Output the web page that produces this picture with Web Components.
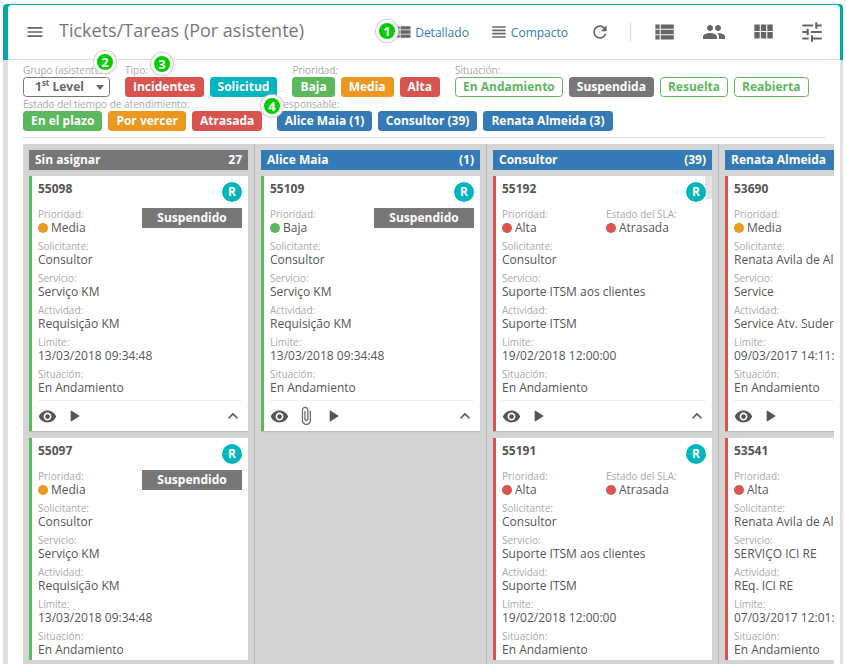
<!DOCTYPE html>
<html lang="es"><head><meta charset="utf-8"><title>Tickets/Tareas</title>
<style>
html,body{margin:0;padding:0;background:#fff;height:100%;overflow:hidden}
body{font-family:"Open Sans","Liberation Sans",sans-serif;color:#555}
</style></head><body>
<x-app>
  <x-marker n="1" style="left:373px;top:16px"></x-marker>
  <x-marker n="2" style="left:91px;top:47px"></x-marker>
  <x-marker n="3" style="left:148px;top:49px"></x-marker>
  <x-marker n="4" style="left:258px;top:91px"></x-marker>
  <x-header slot="header" title="Tickets/Tareas (Por asistente)"></x-header>
  <x-filters slot="filters">
    <x-group label="Grupo (asistentes):"><x-select>1<sup>st</sup> Level</x-select></x-group>
    <x-group label="Tipo:"><x-chip c="#d9534f">Incidentes</x-chip><x-chip c="#00b5bd">Solicitud</x-chip></x-group>
    <x-group label="Prioridad:"><x-chip c="#5cb85c">Baja</x-chip><x-chip c="#ec971f">Media</x-chip><x-chip c="#d9534f">Alta</x-chip></x-group>
    <x-group label="Situación:"><x-chip outline c="#5cb85c">En Andamiento</x-chip><x-chip c="#777">Suspendida</x-chip><x-chip outline c="#5cb85c">Resuelta</x-chip><x-chip outline c="#5cb85c">Reabierta</x-chip></x-group>
    <x-group label="Estado del tiempo de atendimiento:"><x-chip c="#5cb85c">En el plazo</x-chip><x-chip c="#ec971f">Por vercer</x-chip><x-chip c="#d9534f">Atrasada</x-chip></x-group>
    <x-group label="Responsable:"><x-chip c="#337ab7" style="padding:0 7.5px">Alice Maia (1)</x-chip><x-chip c="#337ab7">Consultor (39)</x-chip><x-chip c="#337ab7">Renata Almeida (3)</x-chip></x-group>
  </x-filters>
  <x-board slot="board">
    <x-column name="Sin asignar" count="27" c="#777">
      <x-ticket id-no="55098" edge="#5cb85c" pri="Media" pc="#ec971f" tag="Suspendido" req="Consultor" svc="Serviço KM" act="Requisição KM" lim="13/03/2018 09:34:48"></x-ticket>
      <x-ticket id-no="55097" edge="#5cb85c" pri="Media" pc="#ec971f" tag="Suspendido" req="Consultor" svc="Serviço KM" act="Requisição KM" lim="13/03/2018 09:34:48"></x-ticket>
    </x-column>
    <x-column name="Alice Maia" count="(1)" c="#337ab7">
      <x-ticket id-no="55109" edge="#5cb85c" pri="Baja" pc="#5cb85c" tag="Suspendido" req="Consultor" svc="Serviço KM" act="Requisição KM" lim="13/03/2018 09:34:48" clip></x-ticket>
    </x-column>
    <x-column name="Consultor" count="(39)" c="#337ab7">
      <x-ticket id-no="55192" edge="#d9534f" pri="Alta" pc="#d9534f" sla="Atrasada" req="Consultor" svc="Suporte ITSM aos clientes" act="Suporte ITSM" lim="19/02/2018 12:00:00" notch></x-ticket>
      <x-ticket id-no="55191" edge="#d9534f" pri="Alta" pc="#d9534f" sla="Atrasada" req="Consultor" svc="Suporte ITSM aos clientes" act="Suporte ITSM" lim="19/02/2018 12:00:00"></x-ticket>
    </x-column>
    <x-column name="Renata Almeida" count="(3)" c="#337ab7">
      <x-ticket id-no="53690" edge="#d9534f" pri="Media" pc="#ec971f" req="Renata Avila de Almeida" svc="Service" act="Service Atv. Suder Almeida" lim="09/03/2017 14:11:05"></x-ticket>
      <x-ticket id-no="53541" edge="#d9534f" pri="Alta" pc="#d9534f" req="Renata Avila de Almeida" svc="SERVIÇO ICI RE" act="REq. ICI RE" lim="07/03/2017 12:01:30"></x-ticket>
    </x-column>
  </x-board>
</x-app>
<script>
const P={
menu:'M3 18h18v-2H3v2zm0-5h18v-2H3v2zm0-7v2h18V6H3z',
list:'M4 14h4v-4H4v4zm0 5h4v-4H4v4zM4 9h4V5H4v4zm5 5h12v-4H9v4zm0 5h12v-4H9v4zM9 5v4h12V5H9z',
head:'M4 15h16v-2H4v2zm0 4h16v-2H4v2zm0-8h16V9H4v2zm0-6v2h16V5H4z',
refresh:'M17.65 6.35C16.2 4.9 14.21 4 12 4c-4.42 0-7.99 3.58-7.99 8s3.57 8 7.99 8c3.73 0 6.84-2.55 7.73-6h-2.08c-.82 2.33-3.04 4-5.65 4-3.31 0-6-2.69-6-6s2.69-6 6-6c1.66 0 3.14.69 4.22 1.78L13 11h7V4l-2.35 2.35z',
people:'M16 11c1.66 0 2.99-1.34 2.99-3S17.66 5 16 5c-1.66 0-3 1.34-3 3s1.34 3 3 3zm-8 0c1.66 0 2.99-1.34 2.99-3S9.66 5 8 5C6.34 5 5 6.34 5 8s1.34 3 3 3zm0 2c-2.33 0-7 1.17-7 3.5V19h14v-2.5c0-2.33-4.67-3.5-7-3.5zm8 0c-.29 0-.62.02-.97.05 1.16.84 1.97 1.97 1.97 3.45V19h6v-2.5c0-2.33-4.67-3.5-7-3.5z',
grid:'M4 11h5V5H4v6zm0 7h5v-6H4v6zm6 0h5v-6h-5v6zm6 0h5v-6h-5v6zm-6-7h5V5h-5v6zm6-6v6h5V5h-5z',
tune:'M3 17v2h6v-2H3zM3 5v2h10V5H3zm10 16v-2h8v-2h-8v-2h-2v6h2zM7 9v2H3v2h4v2h2V9H7zm14 4v-2H11v2h10zm-6-4h2V7h4V5h-4V3h-2v6z',
eye:'M12 4.5C7 4.5 2.73 7.61 1 12c1.73 4.39 6 7.5 11 7.5s9.27-3.11 11-7.5c-1.73-4.39-6-7.5-11-7.5zM12 17c-2.76 0-5-2.24-5-5s2.24-5 5-5 5 2.24 5 5-2.24 5-5 5zm0-8c-1.66 0-3 1.34-3 3s1.34 3 3 3 3-1.34 3-3-1.34-3-3-3z',
play:'M8 5v14l11-7z',
clip:'M16.5 6v11.5c0 2.21-1.79 4-4 4s-4-1.79-4-4V5c0-1.38 1.12-2.5 2.5-2.5s2.5 1.12 2.5 2.5v10.5c0 .55-.45 1-1 1s-1-.45-1-1V6H10v9.5c0 1.38 1.12 2.5 2.5 2.5s2.5-1.12 2.5-2.5V5c0-2.21-1.79-4-4-4S7 2.79 7 5v12.5c0 3.04 2.46 5.5 5.5 5.5s5.5-2.46 5.5-5.5V6h-1.5z',
up:'M12 8l-6 6 1.41 1.41L12 10.83l4.59 4.58L18 14z'};
const ic=(n,s,c='#666')=>`<svg width="${s}" height="${s}" viewBox="0 0 24 24" fill="${c}" style="display:block;flex:none"><path d="${P[n]}"/></svg>`;
const esc=s=>String(s??'').replace(/&/g,'&amp;').replace(/</g,'&lt;');
class Base extends HTMLElement{
  connectedCallback(){ if(this.shadowRoot) return; this.attachShadow({mode:'open'}).innerHTML=this.render(); }
}
customElements.define('x-app',class extends Base{render(){return `<style>
:host{display:block;box-sizing:border-box;position:relative;width:840px;height:660px;margin:4px 0 0 3px;
 background:linear-gradient(#00a9a8 0 56px,#e0e0e0 56px);border-radius:4px 4px 0 0}
.p{position:absolute;inset:1px 3px 0 5px;background:#fff;border-radius:4px 4px 0 0;display:flex;flex-direction:column;overflow:hidden;
 box-shadow:0 -1px 0 #00b3b3}
</style><div class="p"><slot name="header"></slot><slot name="filters"></slot><slot name="board"></slot></div><slot></slot>`}});
customElements.define('x-marker',class extends Base{render(){return `<style>
:host{position:absolute;z-index:5;display:flex;align-items:center;justify-content:center;box-sizing:border-box;width:22px;height:22px;border-radius:50%;
 background:#0c0;border:3px solid #fff;box-shadow:0 0 1px 1px #ccc;color:#fff;font:700 13px/1 "Open Sans","Liberation Sans",sans-serif}
</style>${esc(this.getAttribute('n'))}`}});
customElements.define('x-header',class extends Base{render(){return `<style>
:host{display:flex;align-items:center;height:54px;flex:none;border-bottom:1px solid #ddd;padding:0 15px 0 17px;color:#777}
h1{font:400 18px/24px "Open Sans","Liberation Sans",sans-serif;color:#777;margin:0 0 4px 14px;flex:1;white-space:nowrap}
.v{display:flex;align-items:center;gap:2px;font-size:12px;color:#337ab7;white-space:nowrap}
.d{width:1px;height:20px;background:#ddd;margin:0 20px 0 20px}
</style>${ic('menu',20)}<h1>${esc(this.getAttribute('title'))}</h1>
<span class="v" style="margin-right:20px">${ic('list',20)}Detallado</span>
<span class="v" style="margin-right:22px">${ic('head',20)}Compacto</span>
${ic('refresh',20)}<span class="d"></span>
${ic('list',26)}<span style="width:25px"></span>${ic('people',24)}<span style="width:24px"></span>${ic('grid',26)}<span style="width:23px"></span>${ic('tune',26)}`}});
customElements.define('x-filters',class extends Base{render(){return `<style>
:host{display:flex;flex-wrap:wrap;gap:1px 15px;flex:none;margin:4px 15px 0 15px;padding-bottom:6px;border-bottom:1px solid #ddd;align-content:flex-start}
</style><slot></slot>`}});
customElements.define('x-group',class extends Base{render(){return `<style>
:host{display:block}
.l{font-size:10px;line-height:12px;color:#aaa;white-space:nowrap;height:13px;width:0}
.r{display:flex;gap:6px}
</style><div class="l">${esc(this.getAttribute('label'))}</div><div class="r"><slot></slot></div>`}});
customElements.define('x-chip',class extends Base{render(){const c=this.getAttribute('c'),o=this.hasAttribute('outline');return `<style>
:host{display:block;box-sizing:border-box;height:20px;padding:0 8px;border-radius:3.5px;font:700 12px/20px "Open Sans","Liberation Sans",sans-serif;white-space:nowrap;
 background:${o?'#fff':c};color:${o?c:'#fff'};${o?`border:1px solid ${c};line-height:18px;padding:0 7px;`:''}}
</style><slot></slot>`}});
customElements.define('x-select',class extends Base{render(){return `<style>
:host{display:flex;align-items:center;box-sizing:border-box;width:87px;height:20px;border:1px solid #777;border-radius:3.5px;padding:0 5px 0 11px;font:700 12px/18px "Open Sans","Liberation Sans",sans-serif;color:#666;justify-content:space-between}
::slotted(sup){font-size:8px;line-height:0}
i{border:4.5px solid transparent;border-top:5px solid #666;border-bottom:0;display:block}
</style><span><slot></slot></span><i></i>`}});
customElements.define('x-board',class extends Base{render(){return `<style>
:host{display:flex;flex:1;min-height:0;margin:6px 6px 0 15px;overflow:hidden;align-items:stretch}
</style><slot></slot>`}});
customElements.define('x-column',class extends Base{render(){const c=this.getAttribute('c');return `<style>
:host{display:flex;flex-direction:column;box-sizing:border-box;flex:0 0 232px;width:232px;background:#d4d4d4;border-right:1px solid #b5b5b5;padding:6px 6px 4px;min-height:0}
.h{flex:none;display:flex;justify-content:space-between;height:20px;background:${c};color:#fff;font:700 12px/20px "Open Sans","Liberation Sans",sans-serif;padding:0 6px;white-space:nowrap}
.b{flex:1;min-height:0;overflow:hidden;display:flex;flex-direction:column;gap:7px;margin-top:6px}
</style><div class="h"><span>${esc(this.getAttribute('name'))}</span><span>${esc(this.getAttribute('count'))}</span></div><div class="b"><slot></slot></div>`}});
customElements.define('x-ticket',class extends Base{render(){const a=k=>esc(this.getAttribute(k));
const f=(l,v)=>`<div class="f"><div class="k">${l}</div><div class="v">${v}</div></div>`;
const dot=(c,t)=>`<span class="dot" style="background:${c}"></span>${t}`;
const sla=this.getAttribute('sla');const tag=this.getAttribute('tag');
return `<style>
:host{display:block;box-sizing:border-box;flex:none;width:219px;height:255px;background:#fff;border-left:3px solid ${a('edge')};padding:0 6px 0 6px;position:relative;box-shadow:0 1px 1px rgba(0,0,0,.12)}
.t{display:flex;justify-content:space-between;height:32px;padding-top:5px;box-sizing:border-box}
b{font-size:12px;line-height:16px;color:#555}
.r{width:20px;height:20px;border-radius:50%;background:#00b5bd;color:#fff;font:700 12px/20px "Open Sans","Liberation Sans",sans-serif;text-align:center;position:relative;z-index:1;margin-top:1px}
.row{display:grid;grid-template-columns:104px 100px;}
.f{height:32px;white-space:nowrap;overflow:hidden}
.k{font-size:10px;line-height:12px;color:#aaa}
.v{font-size:12px;line-height:15px;color:#555}
.dot{display:inline-block;width:10px;height:10px;border-radius:50%;margin-right:3px;vertical-align:-1px}
.tag{height:20px;background:#777;color:#fff;font:700 12px/20px "Open Sans","Liberation Sans",sans-serif;text-align:center}
.foot{border-top:1px solid #eee;height:30px;display:flex;align-items:center;gap:7px}
.foot .s{flex:1}
.notch{position:absolute;right:0;top:0;width:7px;height:23px;background:#e4e4e4}
</style>${this.hasAttribute('notch')?'<div class="notch"></div>':''}
<div class="t"><b>${a('id-no')}</b><div class="r">R</div></div>
<div class="row">${f('Prioridad:',dot(a('pc'),a('pri')))}${sla?f('Estado del SLA:',dot('#d9534f',esc(sla))):tag?`<div><div class="tag">${esc(tag)}</div></div>`:'<div></div>'}</div>
${f('Solicitante:',a('req'))}${f('Servicio:',a('svc'))}${f('Actividad:',a('act'))}${f('Límite:',a('lim'))}${f('Situación:','En Andamiento')}
<div class="foot">${ic('eye',19,'#555')}${this.hasAttribute('clip')?ic('clip',20,'#667'):''}${ic('play',20,'#555')}<span class="s"></span><span style="margin-right:-1px">${ic('up',20,'#555')}</span></div>`}});
</script></body></html>
